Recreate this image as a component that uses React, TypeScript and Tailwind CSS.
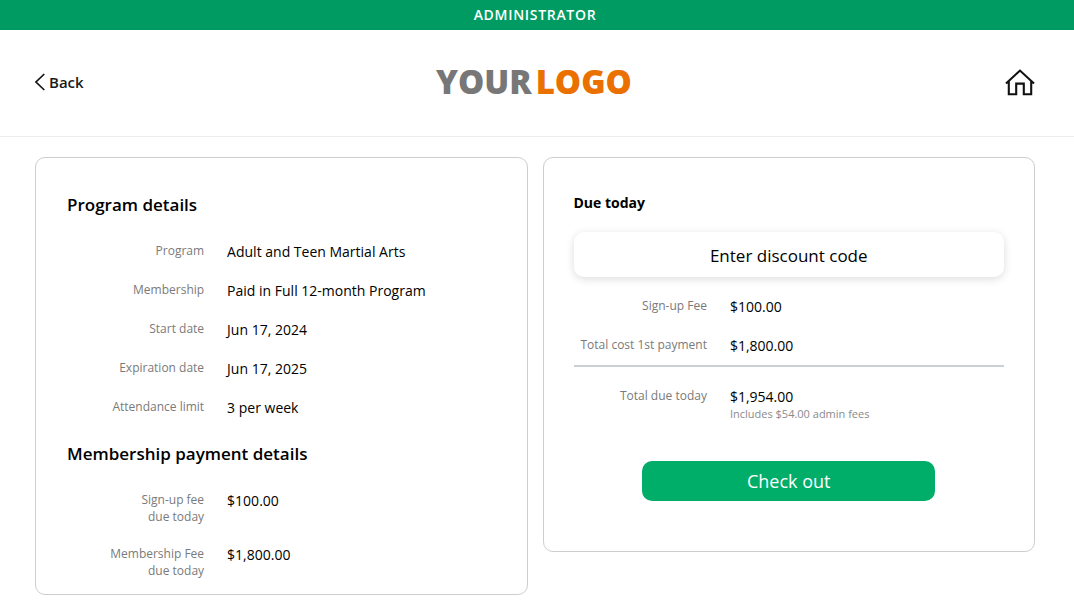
type Item = { label: string[]; value: string; note?: string };

const programItems: Item[] = [
  { label: ['Program'], value: 'Adult and Teen Martial Arts' },
  { label: ['Membership'], value: 'Paid in Full 12-month Program' },
  { label: ['Start date'], value: 'Jun 17, 2024' },
  { label: ['Expiration date'], value: 'Jun 17, 2025' },
  { label: ['Attendance limit'], value: '3 per week' },
];

const paymentItems: Item[] = [
  { label: ['Sign-up fee', 'due today'], value: '$100.00' },
  { label: ['Membership Fee', 'due today'], value: '$1,800.00' },
];

const dueItems: Item[] = [
  { label: ['Sign-up Fee'], value: '$100.00' },
  { label: ['Total cost 1st payment'], value: '$1,800.00' },
];

const totalItems: Item[] = [
  { label: ['Total due today'], value: '$1,954.00', note: 'Includes $54.00 admin fees' },
];

function DetailList({ items, className, labelClass }: { items: Item[]; className: string; labelClass: string }) {
  return (
    <dl className={`flex flex-col ${className}`}>
      {items.map((item) => (
        <div key={item.label[0]} className="flex gap-[23px]">
          <dt className={`flex shrink-0 flex-col text-right text-xs leading-[17px] text-[#7a7a7a] ${labelClass}`}>
            {item.label.map((line) => (
              <span key={line}>{line}</span>
            ))}
          </dt>
          <dd className="text-sm leading-[19px] text-black">
            {item.value}
            {item.note && (
              <span className="block text-[11px] leading-[15px] text-[#8a8a8a]">{item.note}</span>
            )}
          </dd>
        </div>
      ))}
    </dl>
  );
}

export default function App() {
  return (
    <div className="bg-white font-['Open_Sans',sans-serif] text-black">
      <div className="bg-[#009b62] pr-1 text-center text-sm leading-[30px] font-semibold tracking-wider text-white">
        ADMINISTRATOR
      </div>
      <header className="grid h-[107px] grid-cols-3 items-center border-b border-[#ececec] pr-[39px] pl-[35px]">
        <a href="#back" className="flex items-center gap-1 justify-self-start pb-[2px] text-[15px] font-semibold text-[#1a1a1a]">
          <svg width="10" height="18" viewBox="0 0 10 18" fill="none" stroke="#111" strokeWidth="1.6" aria-hidden="true">
            <path d="M9.3 1 1 9l8.3 8" />
          </svg>
          Back
        </a>
        <div className="flex gap-1 justify-self-center pr-[2px] pb-1 text-[33px] leading-none font-extrabold whitespace-nowrap">
          <span className="text-[#777]">YOUR</span>
          <span className="text-[#ea7000]">LOGO</span>
        </div>
        <a href="#home" aria-label="Home" className="justify-self-end">
          <svg width="30" height="28" viewBox="0 0 30 28" fill="none" stroke="#111" strokeWidth="2.1" aria-hidden="true">
            <path d="M1 14.5 15 1.6l14 12.9M3.8 12v13.2h7.4V14.6h7.6v10.6h7.4V12" />
          </svg>
        </a>
      </header>
      <main className="grid grid-cols-2 items-start gap-[15px] pt-5 pr-[39px] pb-2 pl-[35px]">
        <section className="rounded-[10px] border border-[#cdcdd2] px-[31px] pt-9 pb-[15px]">
          <h2 className="text-[17px] leading-[22px] font-semibold">Program details</h2>
          <DetailList items={programItems} className="mt-[26px] gap-5" labelClass="w-[32%]" />
          <h2 className="mt-[26px] text-[17px] leading-[22px] font-semibold">Membership payment details</h2>
          <DetailList items={paymentItems} className="mt-[26px] gap-5" labelClass="w-[32%]" />
        </section>
        <section className="rounded-[10px] border border-[#cdcdd2] px-[30px] pt-[35px] pb-[50px]">
          <h2 className="text-sm leading-[19px] font-bold">Due today</h2>
          <button
            type="button"
            className="mt-5 block h-[45px] w-full rounded-[10px] bg-white pt-[2px] text-[17px] shadow-[0_2px_8px_rgba(0,0,0,0.14)]"
          >
            Enter discount code
          </button>
          <DetailList
            items={dueItems}
            className="mt-5 gap-5 border-b-2 border-[#cbd0d4] pb-[10px]"
            labelClass="w-[31%]"
          />
          <DetailList items={totalItems} className="mt-5" labelClass="w-[31%]" />
          <button
            type="button"
            className="mx-auto mt-10 block h-10 w-[68%] rounded-[10px] bg-[#00ad69] text-lg text-white"
          >
            Check out
          </button>
        </section>
      </main>
    </div>
  );
}
